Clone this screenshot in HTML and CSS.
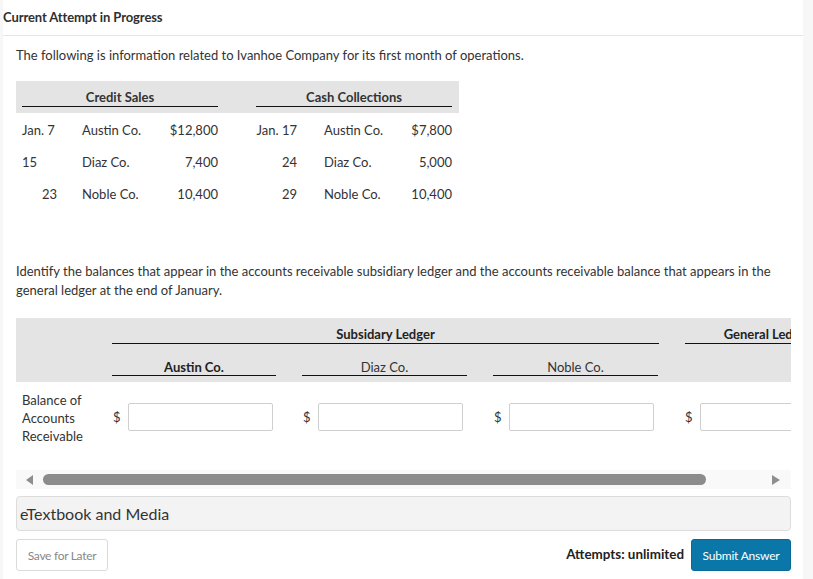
FILE: index.html
```html
<!DOCTYPE html>
<html>
<head>
<meta charset="utf-8">
<link rel="stylesheet" href="styles.css">
</head>
<body>
<div class="panel">
  <div class="title">Current Attempt in Progress</div>
  <div class="content">
    <p class="intro">The following is information related to Ivanhoe Company for its first month of operations.</p>

    <div class="data">
      <div class="dhead">
        <div class="hcell h-credit"><span>Credit Sales</span></div>
        <div class="hcell h-cash"><span>Cash Collections</span></div>
      </div>
      <div class="drow">
        <div>Jan. 7</div><div>Austin Co.</div><div class="r">$12,800</div><div></div>
        <div class="r">Jan. 17</div><div></div><div>Austin Co.</div><div class="r">$7,800</div>
      </div>
      <div class="drow">
        <div>15</div><div>Diaz Co.</div><div class="r">7,400</div><div></div>
        <div class="r">24</div><div></div><div>Diaz Co.</div><div class="r">5,000</div>
      </div>
      <div class="drow">
        <div class="d23">23</div><div>Noble Co.</div><div class="r">10,400</div><div></div>
        <div class="r">29</div><div></div><div>Noble Co.</div><div class="r">10,400</div>
      </div>
    </div>

    <p class="question">Identify the balances that appear in the accounts receivable subsidiary ledger and the accounts receivable balance that appears in the general ledger at the end of January.</p>

    <div class="scroller">
      <div class="ledger">
        <div class="lhead">
          <div class="lrow1">
            <div class="spacer"></div>
            <div class="sub"><span>Subsidary Ledger</span></div>
            <div class="gen"><span>General Ledger</span></div>
          </div>
          <div class="lrow2">
            <div class="spacer"></div>
            <div class="colh"><span>Austin Co.</span></div>
            <div class="colh plain"><span>Diaz Co.</span></div>
            <div class="colh plain"><span>Noble Co.</span></div>
            <div class="colh empty"></div>
          </div>
        </div>
        <div class="lbody">
          <div class="label">Balance of<br>Accounts<br>Receivable</div>
          <div class="field"><span class="dollar">$</span><input type="text"></div>
          <div class="field"><span class="dollar">$</span><input type="text"></div>
          <div class="field"><span class="dollar">$</span><input type="text"></div>
          <div class="field"><span class="dollar">$</span><input type="text"></div>
        </div>
      </div>
    </div>

    <div class="scrollbar">
      <svg class="arrow" width="7" height="10" viewBox="0 0 7 10"><path d="M7 0 L7 10 L0 5 Z" fill="#8f8f8f"/></svg>
      <div class="thumb"></div>
      <svg class="arrow right" width="8" height="10" viewBox="0 0 8 10"><path d="M0 0 L0 10 L8 5 Z" fill="#8f8f8f"/></svg>
    </div>

    <div class="media">eTextbook and Media</div>

    <div class="footer">
      <button class="save">Save for Later</button>
      <div class="right">
        <span class="attempts">Attempts: unlimited</span>
        <button class="submit">Submit Answer</button>
      </div>
    </div>
  </div>
</div>
</body>
</html>
```

FILE: styles.css
```css
html, body {
  margin: 0;
  padding: 0;
  background: #f7f7f7;
}
body {
  font-family: Lato, "Open Sans", sans-serif;
  color: #333;
  font-size: 13px;
  height: 579px;
  overflow: hidden;
}
.panel {
  margin-left: 3px;
  width: 800px;
  height: 579px;
  background: #fff;
}
.title {
  height: 35px;
  line-height: 34px;
  font-weight: bold;
  font-size: 13px;
  color: #2f2f2f;
  border-bottom: 1px solid #e6e6e6;
  letter-spacing: -0.1px;
}
.content {
  padding: 0 12px 0 13px;
}
.intro {
  margin: 0;
  padding-top: 10px;
  line-height: 18px;
  height: 18px;
}
.data {
  margin-top: 17px;
  width: 443px;
}
.dhead {
  background: #e4e4e4;
  display: grid;
  grid-template-columns: 196px 38px 196px;
  padding: 8px 7px 6px 6px;
}
.hcell {
  text-align: center;
  font-weight: bold;
  line-height: 16px;
  border-bottom: 1px solid #111;
  padding-bottom: 1px;
}
.h-credit { grid-column: 1; }
.h-cash { grid-column: 3; }
.drow {
  display: grid;
  grid-template-columns: 60px 78px 58px 38px 41px 27px 71px 57px;
  padding: 1px 7px 0 6px;
  height: 32px;
  box-sizing: border-box;
  align-items: center;
  line-height: 16px;
}
.drow .r { text-align: right; }
.d23 { width: 35px; text-align: right; }

.question {
  margin: 53px 0 0 0;
  line-height: 19px;
}

.scroller {
  margin-top: 18px;
  width: 775px;
  overflow: hidden;
}
.ledger {
  width: 850px;
}
.lhead {
  background: #e4e4e4;
  height: 64px;
}
.lrow1, .lrow2, .lbody {
  display: grid;
  grid-template-columns: 70px 164px 165px 165px 165px;
  column-gap: 26px;
}
.lrow1 {
  padding-top: 8px;
  height: 26px;
  box-sizing: border-box;
  grid-template-columns: 70px 547px 165px;
}
.lrow1 .sub, .lrow1 .gen {
  text-align: center;
  font-weight: bold;
  border-bottom: 1px solid #111;
  line-height: 16px;
  height: 17px;
  color: #222;
}
.lrow2 {
  height: 38px;
  padding-top: 15px;
  box-sizing: border-box;
}
.colh {
  text-align: center;
  border-bottom: 1px solid #111;
  line-height: 16px;
  height: 16px;
  font-weight: bold;
  color: #222;
}
.colh.plain { font-weight: normal; color: #333; }
.colh.empty { border-bottom: none; }
.lbody {
  padding-top: 9px;
  height: 88px;
  box-sizing: border-box;
}
.label {
  padding-left: 6px;
  line-height: 18px;
  white-space: nowrap;
}
.field {
  display: flex;
  align-items: center;
  height: 28px;
  margin-top: 12px;
}
.dollar {
  width: 15px;
  padding-left: 1px;
}
.field input {
  width: 145px;
  height: 28px;
  box-sizing: border-box;
  border: 1px solid #cfcfcf;
  border-radius: 2px;
  margin: 0;
  padding: 0 6px;
  font: inherit;
  background: #fff;
}

.scrollbar {
  height: 19px;
  width: 775px;
  background: #f9f9f9;
  display: flex;
  align-items: center;
  box-sizing: border-box;
  padding: 0 11px 0 10px;
}
.arrow { flex: none; }
.thumb {
  margin-left: 10px;
  width: 663px;
  height: 11px;
  border-radius: 6px;
  background: #8c8c8c;
}
.arrow.right { margin-left: auto; }

.media {
  margin-top: 7px;
  width: 775px;
  height: 35px;
  box-sizing: border-box;
  background: #f3f3f3;
  border: 1px solid #dcdcdc;
  border-radius: 4px;
  font-size: 16px;
  line-height: 33px;
  padding-left: 3px;
  color: #333;
}

.footer {
  margin-top: 8px;
  width: 775px;
  display: flex;
  justify-content: space-between;
  align-items: center;
}
.save {
  width: 92px;
  height: 32px;
  background: #fff;
  border: 1px solid #dadada;
  border-radius: 3px;
  color: #888;
  font-family: Lato, sans-serif;
  font-size: 12px;
  letter-spacing: -0.3px;
  padding: 0;
}
.right {
  display: flex;
  align-items: center;
}
.attempts {
  font-weight: bold;
  font-size: 13.4px;
  color: #222;
  margin-right: 7px;
  margin-top: -3px;
}
.submit {
  width: 100px;
  height: 32px;
  background: #0a77a8;
  border: 1px solid #086a96;
  border-radius: 3px;
  color: #fff;
  font-family: Lato, sans-serif;
  font-size: 12px;
  letter-spacing: -0.2px;
  padding: 0;
}
```
